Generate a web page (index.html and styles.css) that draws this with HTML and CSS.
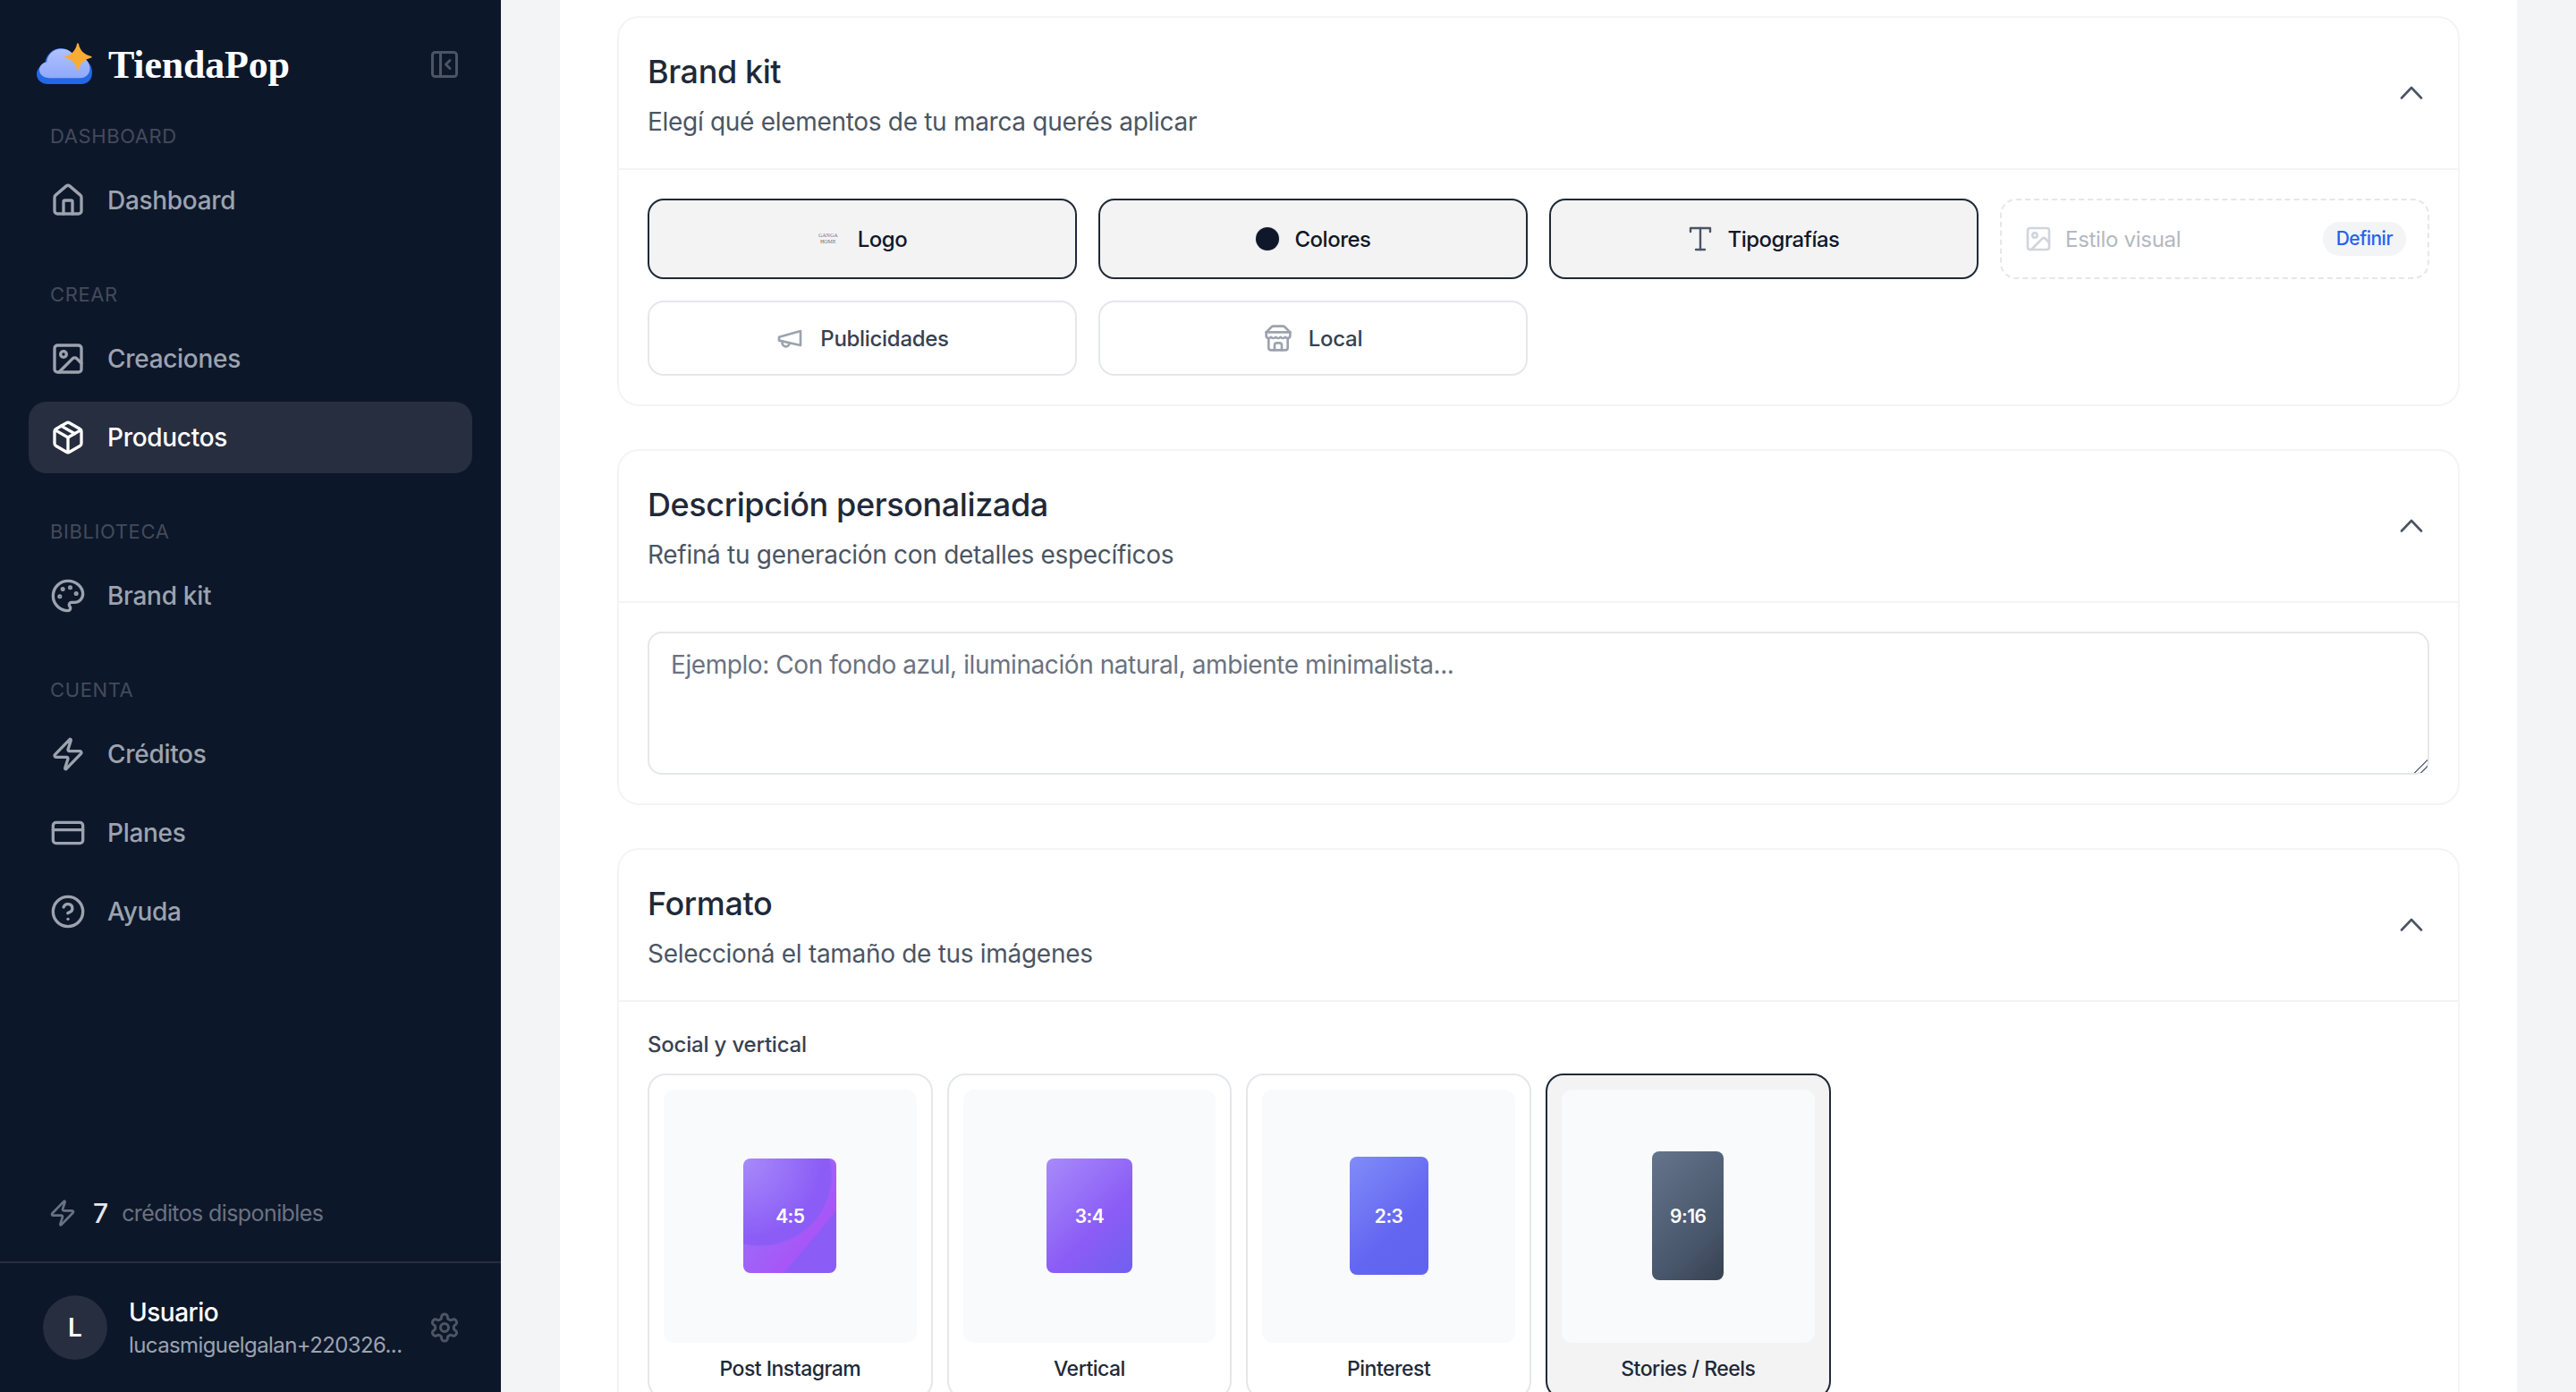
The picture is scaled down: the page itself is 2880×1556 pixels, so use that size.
FILE: index.html
```html
<!DOCTYPE html>
<html lang="es">
<head>
    <meta charset="UTF-8">
    <meta name="viewport" content="width=device-width, initial-scale=1.0">
    <title>TiendaPop</title>
    <link rel="stylesheet" href="styles.css">
</head>
<body>
    <aside class="sidebar">
        <div class="brand">
            <svg class="brand-logo" viewBox="0 0 62 46">
                <defs>
                    <linearGradient id="cloud" x1="0" y1="0" x2="0" y2="1">
                        <stop offset="0" stop-color="#b0c1fd"/>
                        <stop offset="1" stop-color="#8fa9fb"/>
                    </linearGradient>
                </defs>
                <path fill="#2369e6" d="M13 46C5 46 0 41 0 35c0-6 4-10 9-11 1-11 9-18 18-18 7 0 13 4 16 10 2-1 4-1 6 0 7 2 13 8 13 17 0 8-5 13-12 13z"/>
                <path fill="url(#cloud)" transform="translate(3 1.500) scale(.91 .82)" d="M13 46C5 46 0 41 0 35c0-6 4-10 9-11 1-11 9-18 18-18 7 0 13 4 16 10 2-1 4-1 6 0 7 2 13 8 13 17 0 8-5 13-12 13z"/>
                <path fill="#f9ac35" d="M47 1c1 7 6 12 14 14 1 .5 1 1 0 1.500-8 2-13 7-14 13.500-.3 1-1.700 1-2 0-1-7-6-11.500-13-13.500-1-.5-1-1 0-1.500 7-2 12-7 13-14 .3-1 1.700-1 2 0z"/>
            </svg>
            <span class="brand-name">TiendaPop</span>
            <svg class="icon-sm muted" viewBox="0 0 24 24"><rect width="18" height="18" x="3" y="3" rx="2"/><path d="M9 3v18"/><path d="m16 15-3-3 3-3"/></svg>
        </div>

        <div class="nav-label">DASHBOARD</div>
        <a class="nav-item">
            <svg class="icon" viewBox="0 0 24 24"><path d="M15 21v-8a1 1 0 0 0-1-1h-4a1 1 0 0 0-1 1v8"/><path d="M3 10a2 2 0 0 1 .709-1.528l7-5.999a2 2 0 0 1 2.582 0l7 5.999A2 2 0 0 1 21 10v9a2 2 0 0 1-2 2H5a2 2 0 0 1-2-2z"/></svg>
            Dashboard
        </a>

        <div class="nav-label spaced">CREAR</div>
        <a class="nav-item">
            <svg class="icon" viewBox="0 0 24 24"><rect width="18" height="18" x="3" y="3" rx="2" ry="2"/><circle cx="9" cy="9" r="2"/><path d="m21 15-3.086-3.086a2 2 0 0 0-2.828 0L6 21"/></svg>
            Creaciones
        </a>
        <a class="nav-item active">
            <svg class="icon" viewBox="0 0 24 24"><path d="M11 21.730a2 2 0 0 0 2 0l7-4A2 2 0 0 0 21 16V8a2 2 0 0 0-1-1.730l-7-4a2 2 0 0 0-2 0l-7 4A2 2 0 0 0 3 8v8a2 2 0 0 0 1 1.730z"/><path d="M12 22V12"/><path d="m3.300 7 8.700 5 8.700-5"/><path d="m7.500 4.270 9 5.150"/></svg>
            Productos
        </a>

        <div class="nav-label spaced">BIBLIOTECA</div>
        <a class="nav-item">
            <svg class="icon" viewBox="0 0 24 24"><circle cx="13.500" cy="6.500" r=".5" fill="currentColor"/><circle cx="17.500" cy="10.500" r=".5" fill="currentColor"/><circle cx="8.500" cy="7.500" r=".5" fill="currentColor"/><circle cx="6.500" cy="12.500" r=".5" fill="currentColor"/><path d="M12 2C6.500 2 2 6.500 2 12s4.500 10 10 10c.926 0 1.648-.746 1.648-1.688 0-.437-.18-.835-.437-1.125-.29-.289-.438-.652-.438-1.125a1.640 1.640 0 0 1 1.668-1.668h1.996c3.051 0 5.555-2.503 5.555-5.554C21.965 6.012 17.461 2 12 2z"/></svg>
            Brand kit
        </a>

        <div class="nav-label spaced">CUENTA</div>
        <a class="nav-item">
            <svg class="icon" viewBox="0 0 24 24"><path d="M4 14a1 1 0 0 1-.78-1.630l9.900-10.200a.5.5 0 0 1 .86.46l-1.920 6.020A1 1 0 0 0 13 10h7a1 1 0 0 1 .78 1.630l-9.900 10.200a.5.5 0 0 1-.86-.46l1.920-6.020A1 1 0 0 0 11 14z"/></svg>
            Créditos
        </a>
        <a class="nav-item">
            <svg class="icon" viewBox="0 0 24 24"><rect width="20" height="14" x="2" y="5" rx="2"/><line x1="2" x2="22" y1="10" y2="10"/></svg>
            Planes
        </a>
        <a class="nav-item">
            <svg class="icon" viewBox="0 0 24 24"><circle cx="12" cy="12" r="10"/><path d="M9.090 9a3 3 0 0 1 5.830 1c0 2-3 3-3 3"/><path d="M12 17h.01"/></svg>
            Ayuda
        </a>

        <div class="credits">
            <svg class="icon-credit" viewBox="0 0 24 24"><path d="M4 14a1 1 0 0 1-.78-1.630l9.900-10.200a.5.5 0 0 1 .86.46l-1.920 6.020A1 1 0 0 0 13 10h7a1 1 0 0 1 .78 1.630l-9.900 10.200a.5.5 0 0 1-.86-.46l1.920-6.020A1 1 0 0 0 11 14z"/></svg>
            <span class="credits-count">7</span>
            <span class="credits-text">créditos disponibles</span>
        </div>

        <div class="user">
            <div class="avatar">L</div>
            <div class="user-info">
                <div class="user-name">Usuario</div>
                <div class="user-email">lucasmiguelgalan+220326...</div>
            </div>
            <svg class="icon-sm muted" viewBox="0 0 24 24"><path d="M12.220 2h-.44a2 2 0 0 0-2 2v.18a2 2 0 0 1-1 1.730l-.43.25a2 2 0 0 1-2 0l-.15-.08a2 2 0 0 0-2.730.73l-.22.38a2 2 0 0 0 .73 2.730l.15.1a2 2 0 0 1 1 1.720v.51a2 2 0 0 1-1 1.740l-.15.09a2 2 0 0 0-.73 2.730l.22.38a2 2 0 0 0 2.730.73l.15-.08a2 2 0 0 1 2 0l.43.25a2 2 0 0 1 1 1.730V20a2 2 0 0 0 2 2h.44a2 2 0 0 0 2-2v-.18a2 2 0 0 1 1-1.730l.43-.25a2 2 0 0 1 2 0l.15.08a2 2 0 0 0 2.730-.73l.22-.39a2 2 0 0 0-.73-2.730l-.15-.08a2 2 0 0 1-1-1.740v-.5a2 2 0 0 1 1-1.740l.15-.09a2 2 0 0 0 .73-2.730l-.22-.38a2 2 0 0 0-2.730-.73l-.15.08a2 2 0 0 1-2 0l-.43-.25a2 2 0 0 1-1-1.730V4a2 2 0 0 0-2-2z"/><circle cx="12" cy="12" r="3"/></svg>
        </div>
    </aside>

    <main class="main">
        <div class="content">
            <section class="card">
                <header class="card-head">
                    <div>
                        <h2>Brand kit</h2>
                        <p>Elegí qué elementos de tu marca querés aplicar</p>
                    </div>
                    <svg class="chevron" viewBox="0 0 26 15"><path d="M2 13.500 13 2l11 11.500"/></svg>
                </header>
                <div class="card-body kit-grid">
                    <button class="kit-btn selected">
                        <span class="mini-logo">GANGA<br>HOME</span>
                        Logo
                    </button>
                    <button class="kit-btn selected">
                        <span class="color-dot"></span>
                        Colores
                    </button>
                    <button class="kit-btn selected">
                        <svg class="kit-icon type-icon" viewBox="0 0 26 28"><path d="M2 6V2h22v4"/><path d="M13 2v24"/><path d="M8 26h10"/></svg>
                        Tipografías
                    </button>
                    <button class="kit-btn empty">
                        <svg class="kit-icon" viewBox="0 0 24 24"><rect width="18" height="18" x="3" y="3" rx="2" ry="2"/><circle cx="9" cy="9" r="2"/><path d="m21 15-3.086-3.086a2 2 0 0 0-2.828 0L6 21"/></svg>
                        <span class="empty-label">Estilo visual</span>
                        <span class="pill">Definir</span>
                    </button>
                    <button class="kit-btn">
                        <svg class="kit-icon gray" viewBox="0 0 24 24"><path d="m3 11 18-5v12L3 14v-3z"/><path d="M11.600 16.800a3 3 0 1 1-5.800-1.600"/></svg>
                        Publicidades
                    </button>
                    <button class="kit-btn">
                        <svg class="kit-icon gray" viewBox="0 0 24 24"><path d="m2 7 4.410-4.410A2 2 0 0 1 7.830 2h8.340a2 2 0 0 1 1.420.59L22 7"/><path d="M4 12v8a2 2 0 0 0 2 2h12a2 2 0 0 0 2-2v-8"/><path d="M15 22v-4a2 2 0 0 0-2-2h-2a2 2 0 0 0-2 2v4"/><path d="M2 7h20"/><path d="M22 7v3a2 2 0 0 1-2 2 2.700 2.700 0 0 1-1.590-.63.7.7 0 0 0-.82 0A2.700 2.700 0 0 1 16 12a2.700 2.700 0 0 1-1.590-.63.7.7 0 0 0-.82 0A2.700 2.700 0 0 1 12 12a2.700 2.700 0 0 1-1.590-.63.7.7 0 0 0-.82 0A2.700 2.700 0 0 1 8 12a2.700 2.700 0 0 1-1.590-.63.7.7 0 0 0-.82 0A2.700 2.700 0 0 1 4 12a2 2 0 0 1-2-2V7"/></svg>
                        Local
                    </button>
                </div>
            </section>

            <section class="card">
                <header class="card-head">
                    <div>
                        <h2>Descripción personalizada</h2>
                        <p>Refiná tu generación con detalles específicos</p>
                    </div>
                    <svg class="chevron" viewBox="0 0 26 15"><path d="M2 13.500 13 2l11 11.500"/></svg>
                </header>
                <div class="card-body">
                    <textarea class="prompt" placeholder="Ejemplo: Con fondo azul, iluminación natural, ambiente minimalista..."></textarea>
                </div>
            </section>

            <section class="card">
                <header class="card-head">
                    <div>
                        <h2>Formato</h2>
                        <p>Seleccioná el tamaño de tus imágenes</p>
                    </div>
                    <svg class="chevron" viewBox="0 0 26 15"><path d="M2 13.500 13 2l11 11.500"/></svg>
                </header>
                <div class="card-body">
                    <div class="format-title">Social y vertical</div>
                    <div class="format-grid">
                        <div class="format">
                            <div class="format-tile"><div class="ratio r-4-5">4:5</div></div>
                            <div class="format-name">Post Instagram</div>
                        </div>
                        <div class="format">
                            <div class="format-tile"><div class="ratio r-3-4">3:4</div></div>
                            <div class="format-name">Vertical</div>
                        </div>
                        <div class="format">
                            <div class="format-tile"><div class="ratio r-2-3">2:3</div></div>
                            <div class="format-name">Pinterest</div>
                        </div>
                        <div class="format selected">
                            <div class="format-tile"><div class="ratio r-9-16">9:16</div></div>
                            <div class="format-name">Stories / Reels</div>
                        </div>
                    </div>
                </div>
            </section>
        </div>
    </main>
</body>
</html>
```

FILE: styles.css
```css
* {
    margin: 0;
    padding: 0;
    box-sizing: border-box;
}

body {
    display: flex;
    height: 1556px;
    overflow: hidden;
    font-family: Inter, "Noto Sans", sans-serif;
    background-color: #f3f4f6;
}

svg {
    fill: none;
    stroke: currentColor;
    stroke-width: 2;
    stroke-linecap: round;
    stroke-linejoin: round;
    flex-shrink: 0;
}

/* sidebar */
.sidebar {
    width: 560px;
    flex-shrink: 0;
    height: 100%;
    display: flex;
    flex-direction: column;
    background-color: #0d172a;
}

.brand {
    height: 136px;
    padding: 8px 45px 0 41px;
    display: flex;
    align-items: center;
}

.brand-logo {
    width: 62px;
    height: 46px;
    stroke: none;
    margin-top: -3px;
}

.brand-name {
    flex: 1;
    margin-left: 18px;
    font-family: "Liberation Serif", serif;
    font-weight: 700;
    font-size: 44px;
    letter-spacing: -0.2px;
    color: #ffffff;
}

.icon-sm {
    width: 36px;
    height: 36px;
}

.muted {
    color: #4b5563;
}

.nav-label {
    height: 32px;
    line-height: 32px;
    margin-bottom: 16px;
    padding-left: 56px;
    font-size: 22px;
    letter-spacing: 0.6px;
    color: #434b5a;
}

.nav-label.spaced {
    margin-top: 49px;
}

.nav-item {
    height: 80px;
    margin: 0 32px 8px;
    padding: 0 24px;
    display: flex;
    align-items: center;
    gap: 24px;
    border-radius: 20px;
    font-size: 28px;
    font-weight: 500;
    letter-spacing: -0.3px;
    color: #9ca3af;
}

.nav-item:has(+ .nav-label) {
    margin-bottom: 0;
}

.nav-item.active {
    background-color: #272e3f;
    color: #ffffff;
}

.icon {
    width: 40px;
    height: 40px;
}

.credits {
    margin-top: auto;
    height: 40px;
    margin-bottom: 34px;
    padding-left: 54px;
    display: flex;
    align-items: center;
}

.icon-credit {
    width: 32px;
    height: 32px;
    color: #6b7280;
}

.credits-count {
    margin-left: 18px;
    font-size: 30px;
    font-weight: 500;
    color: #e5e7eb;
}

.credits-text {
    margin-left: 15px;
    font-size: 25px;
    letter-spacing: -0.6px;
    color: #6b7280;
}

.user {
    height: 146px;
    padding: 0 45px 0 48px;
    display: flex;
    align-items: center;
    gap: 24px;
    border-top: 2px solid #272e3f;
}

.avatar {
    width: 72px;
    height: 72px;
    flex-shrink: 0;
    display: flex;
    align-items: center;
    justify-content: center;
    border-radius: 50%;
    background-color: #272e3f;
    font-size: 28px;
    font-weight: 600;
    color: #ffffff;
}

.user-info {
    flex: 1;
    min-width: 0;
    padding-top: 1px;
}

.user-name {
    font-size: 28px;
    line-height: 38px;
    font-weight: 500;
    letter-spacing: -0.5px;
    color: #ffffff;
}

.user-email {
    font-size: 24px;
    line-height: 36px;
    letter-spacing: -0.6px;
    color: #9ca3af;
    white-space: nowrap;
}

/* main column */
.main {
    flex: 1;
    padding: 0 66px;
}

.content {
    height: 100%;
    padding: 18px 64px 0;
    background-color: #ffffff;
}

.card {
    margin-bottom: 48px;
    border: 2px solid #f3f4f6;
    border-radius: 24px;
}

.card-head {
    height: 170px;
    padding: 32px;
    display: flex;
    align-items: center;
    justify-content: space-between;
    border-bottom: 2px solid #f3f4f6;
}

.card-head h2 {
    font-size: 36px;
    line-height: 56px;
    margin-bottom: 8px;
    font-weight: 500;
    letter-spacing: -0.4px;
    color: #1f2937;
}

.card-head p {
    font-size: 28px;
    line-height: 40px;
    letter-spacing: -0.3px;
    color: #4b5563;
}

.chevron {
    width: 26px;
    height: 15px;
    margin: -2px 7px 0 0;
    color: #4b5563;
    stroke-width: 2.6;
}

.card-body {
    padding: 32px;
}

/* brand kit */
.kit-grid {
    display: grid;
    grid-template-columns: repeat(4, 1fr);
    gap: 24px;
}

.kit-btn {
    height: 84px;
    display: flex;
    align-items: center;
    justify-content: center;
    gap: 18px;
    border: 2px solid #e5e7eb;
    border-radius: 18px;
    background-color: #ffffff;
    font-family: inherit;
    font-size: 24px;
    font-weight: 500;
    letter-spacing: -0.3px;
    color: #374151;
}

.kit-btn.selected,
.kit-btn.empty {
    height: 90px;
}

.kit-btn.selected {
    border-color: #1f2937;
    background-color: #f3f3f4;
    letter-spacing: -0.5px;
    color: #111827;
}

.kit-btn.empty {
    justify-content: flex-start;
    padding: 0 24px 0 25px;
    gap: 14px;
    border: 2px dashed #e5e7eb;
}

.kit-icon {
    width: 32px;
    height: 32px;
    color: #d1d5db;
}

.kit-icon.gray {
    color: #9ca3af;
}

.type-icon {
    width: 26px;
    height: 28px;
    color: #4b5563;
    stroke-width: 2.4;
}

.mini-logo {
    width: 24px;
    margin-right: 3px;
    font-family: "Liberation Serif", serif;
    font-size: 6px;
    line-height: 7px;
    font-weight: 400;
    letter-spacing: 0;
    color: #6b7280;
}

.color-dot {
    width: 26px;
    height: 26px;
    border-radius: 50%;
    background-color: #0f172a;
    box-shadow: 0 0 0 1px #e5e7eb;
}

.empty-label {
    flex: 1;
    text-align: left;
    font-weight: 400;
    color: #b4b8c0;
}

.pill {
    padding: 0 15px;
    height: 38px;
    line-height: 38px;
    border-radius: 19px;
    background-color: #f3f4f6;
    font-size: 21px;
    letter-spacing: -0.5px;
    color: #2563eb;
}

/* description */
.prompt {
    display: block;
    width: 100%;
    height: 160px;
    padding: 17px 24px;
    border: 2px solid #e5e7eb;
    border-radius: 16px;
    outline: none;
    font-family: inherit;
    font-size: 28px;
    line-height: 36px;
    letter-spacing: -0.43px;
}

.prompt::placeholder {
    color: #6b7280;
    opacity: 1;
}

.prompt::-webkit-resizer {
    background: linear-gradient(135deg, transparent 47%, #6b7280 47% 54%, transparent 54% 71%, #6b7280 71% 78%, transparent 78%);
}

/* format */
.format-title {
    height: 32px;
    line-height: 32px;
    margin-bottom: 16px;
    font-size: 24px;
    font-weight: 500;
    letter-spacing: -0.2px;
    color: #374151;
}

.format-grid {
    display: grid;
    grid-template-columns: repeat(6, 1fr);
    gap: 16px;
}

.format {
    padding: 16px;
    border: 2px solid #e5e7eb;
    border-radius: 20px;
}

.format.selected {
    border-color: #1f2937;
    background-color: #f3f3f4;
}

.format-tile {
    aspect-ratio: 1;
    display: flex;
    align-items: center;
    justify-content: center;
    border-radius: 12px;
    background-color: #f9fafb;
}

.ratio {
    display: flex;
    align-items: center;
    justify-content: center;
    border-radius: 8px;
    font-size: 21px;
    font-weight: 600;
    letter-spacing: -0.5px;
    color: #ffffff;
}

.r-4-5 {
    width: 104px;
    height: 128px;
    background:
        radial-gradient(circle at 0 0, #a78bfa 0, rgba(167, 139, 250, 0) 55%),
        radial-gradient(ellipse 78% 62% at 18% 15%, #8b5cf6 97%, rgba(139, 92, 246, 0) 100%),
        linear-gradient(130deg, rgba(139, 92, 246, 0) 72.4%, #8b5cf6 72.4%),
        linear-gradient(130deg, #9a6cf8 30%, #a855f7 72%);
}

.r-3-4 {
    width: 96px;
    height: 128px;
    background: linear-gradient(135deg, #a78bfa 0%, #8b5cf6 60%, #6f60f1 100%);
}

.r-2-3 {
    width: 88px;
    height: 132px;
    background: linear-gradient(135deg, #818cf8 0%, #6366f1 60%, #6063ee 100%);
}

.r-9-16 {
    width: 80px;
    height: 144px;
    background: linear-gradient(135deg, #64748b 0%, #475569 70%, #374151 100%);
}

.format-name {
    margin-top: 13px;
    line-height: 32px;
    text-align: center;
    font-size: 23px;
    font-weight: 500;
    letter-spacing: -0.5px;
    color: #1f2937;
}
```
